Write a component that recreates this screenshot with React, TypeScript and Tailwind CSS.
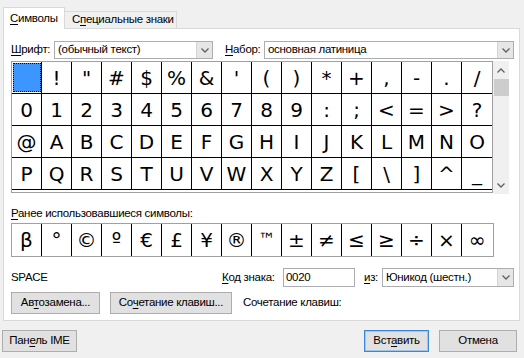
const UI = { fontFamily: '"Liberation Sans", Arial, sans-serif' };
const SYM = { fontFamily: '"DejaVu Sans", Verdana, sans-serif' };

const rows = [
  [' ', '!', '"', '#', '$', '%', '&', "'", '(', ')', '*', '+', ',', '-', '.', '/'],
  ['0', '1', '2', '3', '4', '5', '6', '7', '8', '9', ':', ';', '<', '=', '>', '?'],
  ['@', 'A', 'B', 'C', 'D', 'E', 'F', 'G', 'H', 'I', 'J', 'K', 'L', 'M', 'N', 'O'],
  ['P', 'Q', 'R', 'S', 'T', 'U', 'V', 'W', 'X', 'Y', 'Z', '[', '\\', ']', '^', '_'],
];

const recent = ['β', '°', '©', 'º', '€', '£', '¥', '®', '™', '±', '≠', '≤', '≥', '÷', '×', '∞'];

function Chevron({ up = false }: { up?: boolean }) {
  return (
    <svg width="8" height="5" viewBox="0 0 8 5" className={up ? 'rotate-180' : ''}>
      <path d="M0.5 0.5 L4 4 L7.5 0.5" fill="none" stroke="#606060" strokeWidth="1.3" />
    </svg>
  );
}

// accelerator letter underline
function Acc({ pre = '', k, post = '' }: { pre?: string; k: string; post?: string }) {
  return (
    <span className="whitespace-nowrap">
      {pre}
      <span className="underline underline-offset-2">{k}</span>
      {post}
    </span>
  );
}

function Select({ value, w, h = 'h-[18px]' }: { value: string; w: string; h?: string }) {
  return (
    <div className={`${w} ${h} flex border border-[#abadb3] bg-white`}>
      <div className="flex-1 pl-[3px] flex items-center whitespace-nowrap overflow-hidden">{value}</div>
      <div className="w-[16px] flex items-center justify-center bg-[#e6e6e6] border-l border-[#d4d4d4]">
        <Chevron />
      </div>
    </div>
  );
}

function Btn({ children, w, primary = false }: { children: React.ReactNode; w: string; primary?: boolean }) {
  return (
    <div
      className={`${w} h-[22px] flex items-center justify-center bg-[#e1e1e1] border whitespace-nowrap ${
        primary ? 'border-[#3c86d3] shadow-[inset_0_0_0_1px_#9cc6ee]' : 'border-[#adadad]'
      }`}
    >
      {children}
    </div>
  );
}

export default function App() {
  return (
    <div
      className="w-[524px] h-[358px] bg-[#f0f0f0] text-[11.5px] tracking-[-0.3px] text-black overflow-hidden"
      style={UI}
    >
      {/* tabs */}
      <div className="flex items-end pl-[3px] h-[28px]">
        <div className="w-[62px] h-[22px] bg-white border border-b-0 border-[#d9d9d9] -mb-px relative z-10 flex items-center pl-[6px]">
          <Acc k="С" post="имволы" />
        </div>
        <div className="w-[112px] h-[17px] bg-[#f0f0f0] border border-l-0 border-b-0 border-[#d9d9d9] flex items-center pl-[7px]">
          <Acc pre="С" k="п" post="ециальные знаки" />
        </div>
      </div>

      {/* panel */}
      <div className="ml-[3px] w-[517px] h-[293px] border border-[#d9d9d9] bg-white pl-[7px]">
        <div className="mt-[12px] flex items-center h-[18px]">
          <div className="w-[43px]">
            <Acc k="Ш" post="рифт:" />
          </div>
          <Select value="(обычный текст)" w="w-[159px]" />
          <div className="ml-[12px] w-[39px]">
            <Acc k="Н" post="абор:" />
          </div>
          <Select value="основная латиница" w="w-[250px]" />
        </div>

        {/* symbol grid */}
        <div className="mt-[2px] flex tracking-normal">
          <div className="w-[482px] h-[132px] border border-[#a0a0a0] bg-white" style={SYM}>
            {rows.map((r, ri) => (
              <div key={ri} className="flex h-[32px] border-b border-black">
                {r.map((c, ci) => (
                  <div
                    key={ci}
                    className={`w-[30px] h-full flex items-center justify-center text-[20px] ${
                      ci < 15 ? 'border-r border-black' : ''
                    }`}
                  >
                    {ri === 0 && ci === 0 ? (
                      <div className="w-[28px] h-[29px] bg-[#3d95ff] outline-1 outline-dotted outline-black -outline-offset-1" />
                    ) : (
                      c
                    )}
                  </div>
                ))}
              </div>
            ))}
          </div>
          <div className="w-[16px] h-[133px] bg-[#f0f0f0] flex flex-col items-center">
            <div className="h-[18px] flex items-center">
              <Chevron up />
            </div>
            <div className="w-[15px] h-[17px] bg-[#cdcdcd]" />
            <div className="flex-1" />
            <div className="h-[18px] flex items-center">
              <Chevron />
            </div>
          </div>
        </div>

        <div className="mt-[11px] h-[16px] leading-[16px]">
          <Acc k="Р" post="анее использовавшиеся символы:" />
        </div>
        <div className="mt-[2px] w-[483px] h-[34px] border border-[#a0a0a0] flex tracking-normal" style={SYM}>
          {recent.map((c, i) => (
            <div
              key={i}
              className={`w-[30px] h-full flex justify-center items-center ${
                c === '™' ? 'text-[17px]' : 'text-[20px]'
              } ${i < 15 ? 'border-r border-black' : ''}`}
            >
              {c}
            </div>
          ))}
        </div>

        <div className="mt-[11px] flex items-center h-[19px]">
          <div className="w-[211px]">SPACE</div>
          <div className="w-[61px]">
            <Acc k="К" post="од знака:" />
          </div>
          <div className="w-[72px] h-[19px] border border-[#abadb3] pl-[2px] flex items-center">0020</div>
          <div className="ml-[9px] w-[18px]">
            <Acc k="и" post="з:" />
          </div>
          <Select value="Юникод (шестн.)" w="w-[132px]" h="h-[19px]" />
        </div>

        <div className="mt-[5px] flex items-center">
          <Btn w="w-[89px]">
            <Acc pre="Ав" k="т" post="озамена..." />
          </Btn>
          <div className="ml-[10px]">
            <Btn w="w-[122px]">
              <Acc pre="Со" k="ч" post="етание клавиш..." />
            </Btn>
          </div>
          <div className="ml-[11px] whitespace-nowrap">Сочетание клавиш:</div>
        </div>
      </div>

      {/* bottom buttons */}
      <div className="mt-[9px] flex items-center pl-[2px]">
        <Btn w="w-[75px]">
          <Acc pre="Пан" k="е" post="ль IME" />
        </Btn>
        <div className="ml-auto flex gap-[10px] pr-[7px]">
          <Btn w="w-[65px]" primary>
            <Acc pre="Вст" k="а" post="вить" />
          </Btn>
          <Btn w="w-[78px]">Отмена</Btn>
        </div>
      </div>
    </div>
  );
}
